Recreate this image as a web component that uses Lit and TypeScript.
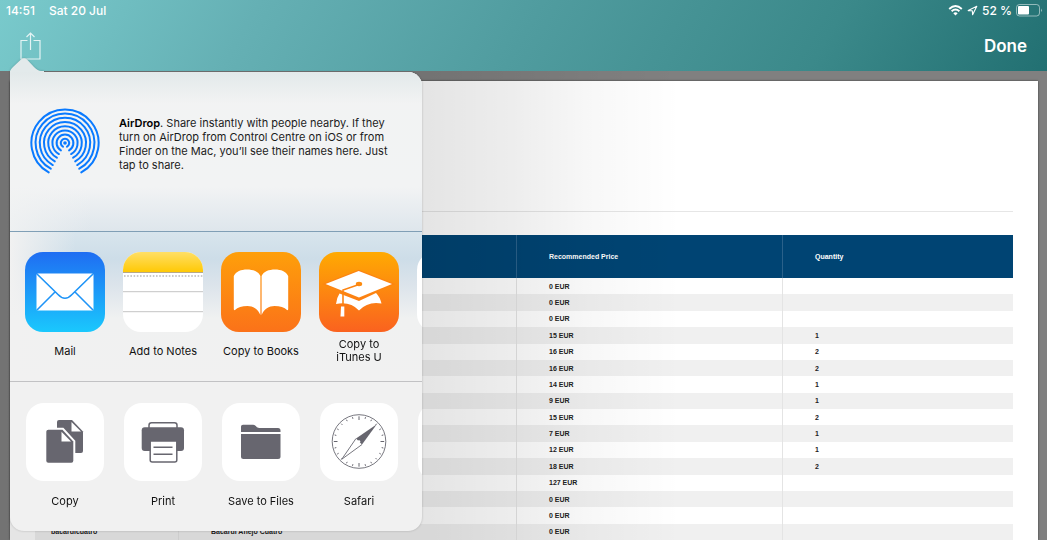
import { LitElement, html, css, svg } from "lit";
import { customElement } from "lit/decorators.js";

const tileMail = svg`
  <defs><linearGradient id="mail" x1="0" y1="0" x2="0" y2="1"><stop offset="0" stop-color="#1f6df2"/><stop offset="1" stop-color="#1ac8fd"/></linearGradient></defs>
  <rect width="80" height="80" rx="18" fill="url(#mail)"/>
  <rect x="11.5" y="21.5" width="57" height="37" rx="1.5" fill="#fff"/>
  <path d="M12 22 L33 42.5 Q40 50 47 42.5 L68 22 M12 58 L30 40 M68 58 L50 40" fill="none" stroke="#1f94f7" stroke-width="1.6"/>`;

const tileNotes = svg`
  <defs>
    <linearGradient id="notes" x1="0" y1="0" x2="0" y2="1"><stop offset="0" stop-color="#ffdf66"/><stop offset="1" stop-color="#ffc905"/></linearGradient>
    <clipPath id="tile"><rect width="80" height="80" rx="18"/></clipPath>
  </defs>
  <g clip-path="url(#tile)">
    <rect width="80" height="80" fill="#fff"/>
    <rect width="80" height="20" fill="url(#notes)"/>
    <path d="M0 20.5H80" stroke="#b5a88a"/>
    <path d="M1 24H80" stroke="#b9b9b9" stroke-width="1.6" stroke-dasharray="1.6 1.6"/>
    <path d="M0 39.7H80M0 59.7H80" stroke="#c4c4c4"/>
  </g>`;

const tileBooks = svg`
  <defs><linearGradient id="books" x1="0" y1="0" x2="0" y2="1"><stop offset="0" stop-color="#fe9f0a"/><stop offset="1" stop-color="#fb7219"/></linearGradient></defs>
  <rect width="80" height="80" rx="18" fill="url(#books)"/>
  <path d="M12.8 24 C15 19.5 20 17.5 26 17.5 C32 17.5 37.5 19.5 39.4 24 V63 C37 57 32 54 26.5 54 C21 54 16.5 55.5 14 58 Q12.8 58.5 12.8 57 Z
    M67.2 24 C65 19.5 60 17.5 54 17.5 C48 17.5 42.5 19.5 40.6 24 V63 C43 57 48 54 53.5 54 C59 54 63.5 55.5 66 58 Q67.2 58.5 67.2 57 Z" fill="#fff"/>`;

const tileITunes = svg`
  <defs><linearGradient id="itunes" x1="0" y1="0" x2="0" y2="1"><stop offset="0" stop-color="#ffaa02"/><stop offset="1" stop-color="#fa621f"/></linearGradient></defs>
  <rect width="80" height="80" rx="18" fill="url(#itunes)"/>
  <path d="M20.5 41.5 L40 49 L57 41 Q61 45 62.5 51.5 Q49 49 40 58.5 Q31 49 17 52 Q17.5 46 20.5 41.5Z" fill="#fff"/>
  <path d="M6.5 32 L39.7 19 L73 32 L40 45.5Z" fill="#fff" stroke="#fc8412" stroke-width="2.4" paint-order="stroke"/>
  <ellipse cx="40" cy="32" rx="3.2" ry="2.2" fill="#fc8b10"/>
  <path d="M40 32.5 L24 38 V53" fill="none" stroke="#fc8412" stroke-width="1.6"/>
  <path d="M22 54.5 H25.3 V64.5 H21.5Z" fill="#fff"/>`;

const sheet = svg`<rect width="78" height="78" rx="18" fill="#fff"/>`;

const tileCopy = svg`${sheet}
  <path d="M33 17 H46 L57 28.5 V48 Q57 50 55 50 H33 Q31 50 31 48 V19 Q31 17 33 17Z" fill="#67666f"/>
  <path d="M45.5 19 V28.5 H55Z" fill="#fff"/>
  <path d="M22.3 26.7 H36.5 L47.3 38.5 V57.8 Q47.3 59.8 45.3 59.8 H22.3 Q20.3 59.8 20.3 57.8 V28.7 Q20.3 26.7 22.3 26.7Z" fill="#67666f" stroke="#fff" stroke-width="4" paint-order="stroke"/>
  <path d="M35.5 28.8 V38.6 H45Z" fill="#fff"/>`;

const tilePrint = svg`${sheet}
  <rect x="25" y="19.8" width="28" height="9" rx="2.5" fill="#fff" stroke="#67666f" stroke-width="1.5"/>
  <rect x="17.7" y="24.3" width="42.3" height="23.7" rx="3" fill="#67666f"/>
  <path d="M26.2 38 H52.8 V57 Q52.8 59 50.8 59 H28.2 Q26.2 59 26.2 57Z" fill="#fff" stroke="#67666f" stroke-width="1.5"/>
  <path d="M29.5 44.3 H48.5 M29.5 51.3 H48.5" stroke="#67666f" stroke-width="1.6"/>`;

const tileFiles = svg`${sheet}
  <path d="M19 29 V23.5 Q19 21.7 21 21.7 H31 Q32.5 21.7 33.5 22.7 L35 24.2 Q36 25 37.5 25 H56 Q58.5 25 58.5 27.5 V29Z" fill="#67666f"/>
  <path d="M19 31 H58.5 V53.5 Q58.5 56 56 56 H21.5 Q19 56 19 53.5Z" fill="#67666f"/>`;

const ticks = Array.from({ length: 24 }, (_, i) => {
  const a = (i * Math.PI) / 12;
  const inner = i % 6 === 0 ? 21.5 : 23.5;
  return svg`<line x1=${39 + inner * Math.sin(a)} y1=${38.5 - inner * Math.cos(a)} x2=${39 + 25.2 * Math.sin(a)} y2=${38.5 - 25.2 * Math.cos(a)} stroke="#67666f" stroke-width="1"/>`;
});

const tileSafari = svg`${sheet}
  <circle cx="39" cy="38.5" r="26.8" fill="none" stroke="#67666f" stroke-width="0.9"/>
  ${ticks}
  <path d="M56.8 21.2 L36 35.5 L42 41.5Z" fill="#67666f"/>
  <path d="M36 35.5 L21.7 56.3 L42 41.5" fill="none" stroke="#67666f" stroke-width="0.9"/>
  <circle cx="39" cy="38.5" r="1.3" fill="#fff"/>`;

const half = (29 * Math.PI) / 180;
const rings = Array.from({ length: 8 }, (_, i) => {
  const r = 4.2 * (i + 1);
  const dx = r * Math.sin(half);
  const y = 35 + r * Math.cos(half);
  return svg`<path d="M${35 - dx} ${y} A${r} ${r} 0 1 1 ${35 + dx} ${y}" fill="none" stroke="#0a7aff" stroke-width="2" stroke-linecap="round"/>`;
});

const apps = [
  { label: "Mail", art: tileMail },
  { label: "Add to Notes", art: tileNotes },
  { label: "Copy to Books", art: tileBooks },
  { label: "Copy to iTunes U", art: tileITunes },
  { label: "", art: svg`<rect width="80" height="80" rx="18" fill="#fff"/>` },
];

const actions = [
  { label: "Copy", art: tileCopy },
  { label: "Print", art: tilePrint },
  { label: "Save to Files", art: tileFiles },
  { label: "Safari", art: tileSafari },
  { label: "", art: sheet },
];

const rows: string[][] = [
  ["", "", "0 EUR", ""],
  ["", "", "0 EUR", ""],
  ["", "", "0 EUR", ""],
  ["", "", "15 EUR", "1"],
  ["", "", "16 EUR", "2"],
  ["", "", "16 EUR", "2"],
  ["", "", "14 EUR", "1"],
  ["", "", "9 EUR", "1"],
  ["", "", "15 EUR", "2"],
  ["", "", "7 EUR", "1"],
  ["", "", "12 EUR", "1"],
  ["", "", "18 EUR", "2"],
  ["", "", "127 EUR", ""],
  ["", "", "0 EUR", ""],
  ["", "", "0 EUR", ""],
  ["bacardicuatro", "Bacardi Anejo Cuatro", "0 EUR", ""],
];

@customElement("share-sheet")
export class ShareSheet extends LitElement {
  static styles = css`
    :host {
      display: block;
      filter: drop-shadow(0 0 1px rgba(0, 0, 0, 0.2));
    }
    .arrow {
      display: block;
      width: 34px;
      height: 14px;
      fill: #e3eaeb;
    }
    .panel {
      border-radius: 0 14px 14px 14px;
      overflow: hidden;
      background: #f1f1f1;
    }
    .airdrop {
      display: flex;
      align-items: flex-start;
      gap: 19px;
      box-sizing: border-box;
      height: 159px;
      padding: 36px 20px 0;
      background: linear-gradient(rgba(226, 233, 234, 1), rgba(226, 233, 234, 0) 20%),
        linear-gradient(90deg, rgba(242, 243, 243, 0.8), rgba(242, 243, 243, 0) 20%),
        linear-gradient(#f2f3f3, #f2f3f4 72%, #dee6ec);
    }
    .rings {
      flex: none;
      width: 70px;
      height: 70px;
    }
    .blurb {
      margin: 8px 0 0;
      font-size: 11px;
      line-height: 14px;
      color: #1c1c1c;
    }
    .blurb strong {
      font-weight: 600;
      color: #000;
    }
    .row {
      display: flex;
      gap: 18px;
      box-sizing: border-box;
      height: 150px;
      padding: 20px 15px 0;
      overflow: hidden;
      border-top: 1px solid #c2c2c4;
    }
    .apps {
      border-top-color: #809fb6;
      background: linear-gradient(90deg, #f1f1f1, rgba(241, 241, 241, 0) 16%),
        linear-gradient(#d8e5ed, #cddde8 18%, #dce4eb 36%, #f0f1f1 58%, #f1f1f1);
    }
    .actions {
      padding-top: 21px;
    }
    .item {
      flex: none;
      display: flex;
      flex-direction: column;
      align-items: center;
      gap: 6px;
      width: 80px;
      padding: 0;
      border: 0;
      background: none;
      font: inherit;
      font-size: 11px;
      line-height: 13px;
      color: #111;
    }
    .icon {
      display: block;
      width: 80px;
      height: 80px;
    }
    .actions .icon {
      width: 78px;
      height: 78px;
    }
    .actions .item {
      gap: 7px;
    }
    .label {
      display: flex;
      align-items: center;
      height: 26px;
      max-width: 60px;
      text-align: center;
    }
    .wide {
      max-width: none;
      white-space: nowrap;
    }
  `;

  private item(entry: { label: string; art: unknown }, size: number) {
    const wraps = entry.label.length > 14;
    return html`<button class="item" type="button" aria-label=${entry.label || "More"}>
      <svg class="icon" viewBox="0 0 ${size} ${size}" aria-hidden="true">${entry.art}</svg>
      <span class="label ${wraps ? "" : "wide"}">${entry.label}</span>
    </button>`;
  }

  render() {
    return html`
      <svg class="arrow" viewBox="0 0 34 14" aria-hidden="true">
        <path d="M0 14 V13 Q1 11 3 9 L11 1.5 Q14 -1 17 1.5 L24 9 Q28 13 31 13 H34 V14Z" />
      </svg>
      <div class="panel">
        <section class="airdrop">
          <svg class="rings" viewBox="0 0 70 70" aria-hidden="true">
            ${rings}<circle cx="35" cy="35" r="1.8" fill="#0a7aff" />
          </svg>
          <p class="blurb">
            <strong>AirDrop</strong>. Share instantly with people nearby. If they turn on AirDrop from Control Centre
            on iOS or from Finder on the Mac, you’ll see their names here. Just tap to share.
          </p>
        </section>
        <section class="row apps">${apps.map((a) => this.item(a, 80))}</section>
        <section class="row actions">${actions.map((a) => this.item(a, 78))}</section>
      </div>
    `;
  }
}

@customElement("app-root")
export class AppRoot extends LitElement {
  static styles = css`
    :host {
      position: relative;
      display: flex;
      flex-direction: column;
      height: 100vh;
      overflow: hidden;
      background: #808080;
      font-family: Inter, "Liberation Sans", sans-serif;
    }
    .top {
      flex: none;
      height: 71px;
      color: #fff;
      background: linear-gradient(120deg, #79cacc, #65b0b4 24%, #509c9f 50%, #3b898a 78%, #227072);
    }
    .status {
      display: flex;
      align-items: center;
      justify-content: space-between;
      height: 20px;
      padding: 0 5px 0 6px;
      font-size: 12px;
      font-weight: 500;
    }
    .group {
      display: flex;
      align-items: center;
      gap: 14px;
    }
    .signals {
      gap: 4px;
    }
    .bar {
      display: flex;
      align-items: center;
      justify-content: space-between;
      height: 51px;
      padding: 0 20px;
    }
    .plain {
      padding: 0;
      border: 0;
      background: none;
      color: inherit;
      font: inherit;
    }
    .done {
      font-size: 17px;
      font-weight: 600;
    }
    .glyph {
      display: block;
    }
    .stage {
      position: relative;
      flex: 1;
      display: flex;
      min-height: 0;
      padding: 10px 9px 0 10px;
    }
    .stage::after {
      content: "";
      position: absolute;
      inset: 0;
      pointer-events: none;
      background: linear-gradient(90deg, rgba(0, 0, 0, 0.1) 41%, rgba(0, 0, 0, 0.07) 49%, rgba(0, 0, 0, 0.03) 56%, transparent 65%);
    }
    .paper {
      flex: 1;
      display: flex;
      flex-direction: column;
      padding: 0 25px;
      background: #fff;
      box-shadow: 0 0 2px rgba(0, 0, 0, 0.6);
    }
    .rule {
      width: 100%;
      margin: 130px 0 23px;
      border: 0;
      border-top: 1px solid #e6e6e6;
    }
    .prices {
      flex: 1;
      display: flex;
      flex-direction: column;
      font: bold 7px/8px "Liberation Sans", Arial, sans-serif;
      color: #222;
    }
    .head {
      flex: none;
      height: 43px;
      display: grid;
      color: #fff;
      background: #004473;
    }
    .body {
      flex: 1;
      display: grid;
      grid-auto-rows: 1fr;
    }
    .line {
      display: grid;
      grid-template-columns: 143fr 338fr 266fr 231fr;
    }
    .body .line:nth-child(even) {
      background: #f0f0f0;
    }
    .cell {
      display: flex;
      align-items: center;
      padding: 1px 32px 0;
      border-left: 1px solid #e4e4e4;
      text-align: left;
    }
    .head .cell {
      border-left-color: #2a618a;
    }
    .line .cell:first-child {
      padding: 1px 16px 0;
      border-left: 0;
    }
    .sheet {
      position: absolute;
      z-index: 1;
      left: 10px;
      top: 58px;
      width: 412px;
    }
  `;

  render() {
    return html`
      <header class="top">
        <div class="status">
          <div class="group"><span>14:51</span><span>Sat 20 Jul</span></div>
          <div class="group signals">
            <svg class="glyph" width="15" height="11" viewBox="0 0 15 11" aria-hidden="true">
              <path d="M1.2 4 Q7.5 -1.8 13.8 4 M3.6 6.3 Q7.5 2.8 11.4 6.3" fill="none" stroke="#fff" stroke-width="1.9" />
              <path d="M5.3 8.2 Q7.5 6.4 9.7 8.2 L7.5 10.5Z" fill="#fff" />
            </svg>
            <svg class="glyph" width="11" height="11" viewBox="0 0 11 11" aria-hidden="true">
              <path d="M1.2 5.6 L9.8 1.2 L5.6 9.8 L5.3 5.8Z" fill="none" stroke="#fff" stroke-width="1.1" stroke-linejoin="round" />
            </svg>
            <span>52 %</span>
            <svg class="glyph" width="26" height="13" viewBox="0 0 26 13" aria-hidden="true">
              <rect x="0.5" y="0.5" width="23" height="11.5" rx="3" fill="none" stroke="#fff" stroke-opacity="0.5" />
              <rect x="2" y="2" width="11" height="8.5" rx="1" fill="#fff" />
              <path d="M25 4.5 Q26.5 6.25 25 8Z" fill="#fff" fill-opacity="0.6" />
            </svg>
          </div>
        </div>
        <div class="bar">
          <button class="plain" type="button" aria-label="Share">
            <svg class="glyph" width="21" height="28" viewBox="0 0 21 28" aria-hidden="true">
              <path d="M7.5 8.5 H1 V27 H20 V8.5 H13.5 M10.5 18 V1.5 M6.5 5 L10.5 1 L14.5 5" fill="none" stroke="#fff" stroke-opacity="0.8" stroke-width="1.2" />
            </svg>
          </button>
          <button class="plain done" type="button">Done</button>
        </div>
      </header>
      <main class="stage">
        <article class="paper">
          <hr class="rule" />
          <table class="prices">
            <thead class="head">
              <tr class="line">
                <th class="cell"></th>
                <th class="cell"></th>
                <th class="cell">Recommended Price</th>
                <th class="cell">Quantity</th>
              </tr>
            </thead>
            <tbody class="body">
              ${rows.map((r) => html`<tr class="line">${r.map((c) => html`<td class="cell">${c}</td>`)}</tr>`)}
            </tbody>
          </table>
        </article>
      </main>
      <share-sheet class="sheet"></share-sheet>
    `;
  }
}
